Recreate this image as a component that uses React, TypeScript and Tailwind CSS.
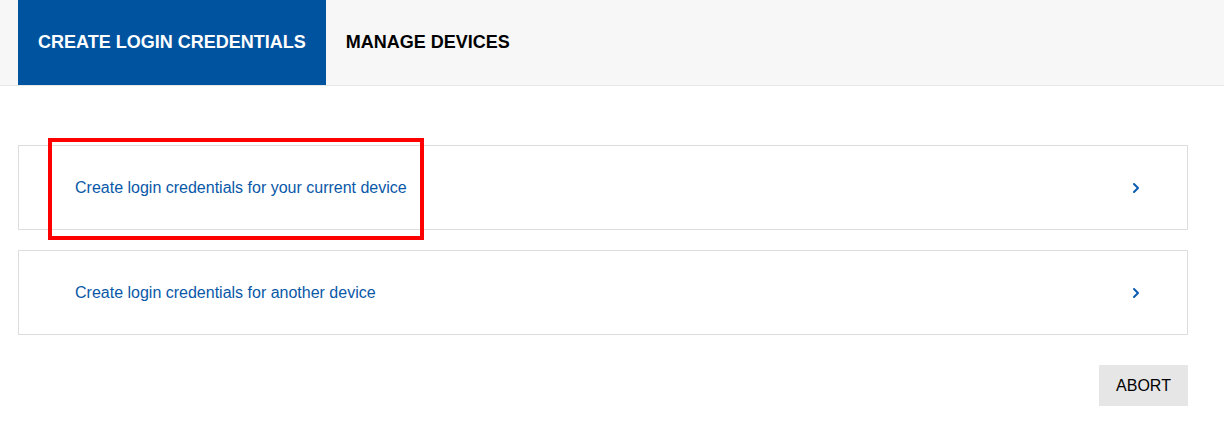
import React from "react";

function Chevron() {
  return (
    <svg width="8" height="12" viewBox="0 0 8 12" fill="none" className="shrink-0">
      <path d="M2 2 L6 6 L2 10" stroke="#0a5cb0" strokeWidth="2" strokeLinecap="round" strokeLinejoin="round" />
    </svg>
  );
}

function Row({ label, highlighted }: { label: string; highlighted?: boolean }) {
  return (
    <div className="relative flex h-[85px] items-center justify-between border border-[#dddddd] bg-white pl-[56px] pr-[47px]">
      <span className="text-[16px] text-[#0a58a8]">{label}</span>
      <Chevron />
      {highlighted && (
        <div className="pointer-events-none absolute left-[29px] top-[-8px] h-[102px] w-[376px] border-4 border-[#ff0000]" />
      )}
    </div>
  );
}

export default function App() {
  return (
    <div className="min-h-[438px] bg-white" style={{ fontFamily: '"Liberation Sans", Arial, sans-serif' }}>
      <div className="flex h-[86px] border-b border-[#e8e8e8] bg-[#f7f7f7] pl-[18px]">
        <div className="flex items-center bg-[#00539f] px-[20px] text-[18px] font-bold text-white">
          CREATE LOGIN CREDENTIALS
        </div>
        <div className="flex items-center px-[20px] text-[18px] font-bold text-black">MANAGE DEVICES</div>
      </div>
      <div className="flex flex-col gap-[20px] pl-[18px] pr-[36px] pt-[59px]">
        <Row label="Create login credentials for your current device" highlighted />
        <Row label="Create login credentials for another device" />
        <div className="mt-[10px] flex justify-end">
          <button className="h-[41px] w-[89px] bg-[#e6e6e6] text-[16px] text-black">ABORT</button>
        </div>
      </div>
    </div>
  );
}
